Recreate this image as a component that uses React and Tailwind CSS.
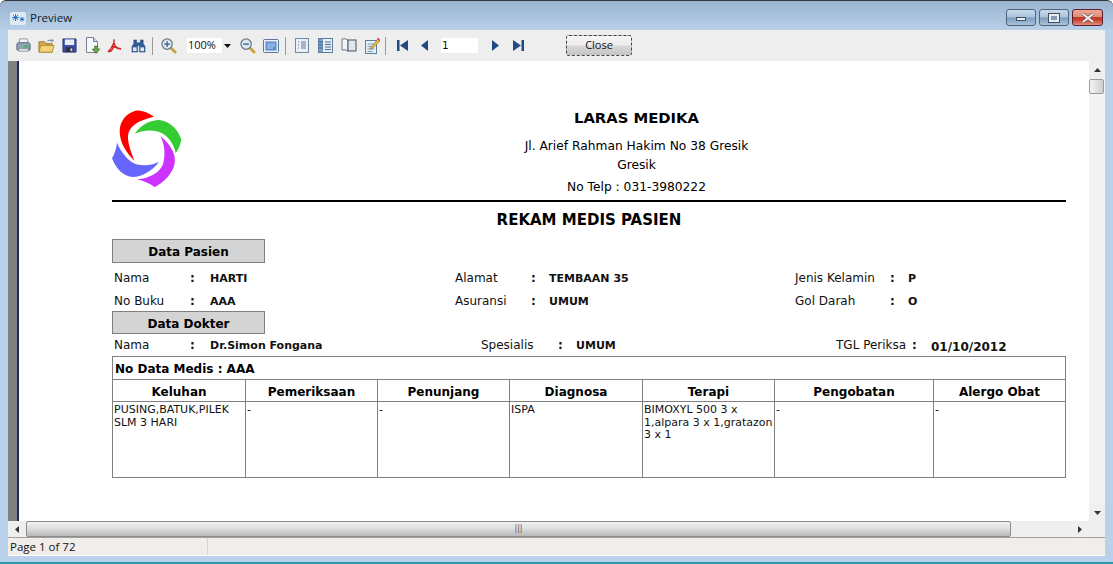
const F = { fontFamily: '"DejaVu Sans", sans-serif' };

const Printer = () => (
  <svg width="17" height="17" viewBox="0 0 18 18">
    <path d="M5 2h8l1 5H4z" fill="#f4f6f8" stroke="#8a949e" />
    <path d="M2 8q0-2 2-2h10q2 0 2 2v5q0 1-1 1H3q-1 0-1-1z" fill="#8fa3b5" stroke="#56687a" />
    <rect x="4" y="12" width="10" height="3" fill="#d8dee4" stroke="#6b7a88" strokeWidth=".6" />
    <rect x="10" y="9" width="4" height="2" fill="#35b34a" />
  </svg>
);
const Folder = () => (
  <svg width="17" height="17" viewBox="0 0 18 18">
    <path d="M1 5h6l1 2h7v9H1z" fill="#d6a94a" stroke="#9a7a34" />
    <path d="M3 9h14l-2 7H1z" fill="#f3d37a" stroke="#b08f3a" />
    <path d="M9 5q2-3 6-2l-1-2 3 3-3 2 .5-1.500q-3-.5-5.500.5z" fill="#7e95ad" />
  </svg>
);
const Floppy = () => (
  <svg width="15" height="15" viewBox="0 0 16 16">
    <path d="M1 1h14v14H1z" fill="#3a4da6" stroke="#2a3880" />
    <rect x="3" y="1.500" width="10" height="6" fill="#e8ecf6" />
    <rect x="4" y="10" width="8" height="5" fill="#2c2f44" />
    <rect x="9" y="11" width="2" height="3" fill="#cfd4e4" />
  </svg>
);
const Export = () => (
  <svg width="16" height="17" viewBox="0 0 16 17">
    <path d="M1.500 .5h7l4 4v11h-11z" fill="#f6f8fb" stroke="#76818d" />
    <path d="M8.500 .5v4h4" fill="#ccd3da" stroke="#76818d" />
    <path d="M9.500 9h3v3h2.500l-4 4.500-4-4.500h2.500z" fill="#6aa648" stroke="#3f6e2a" strokeWidth=".6" />
  </svg>
);
const Pdf = () => (
  <svg width="16" height="16" viewBox="0 0 16 16">
    <path d="M7 1.500q1 4-5.500 12 3 1 5-5 4.500 2.500 7.500 2.500-4-1-6-3q-1.500-4-1-6.500z" fill="none" stroke="#d02020" strokeWidth="1.400" />
  </svg>
);
const Binoc = () => (
  <svg width="15" height="15" viewBox="0 0 16 16">
    <path d="M3 2h3v3h4V2h3v4l2 3v6H9V8H7v7H1V9l2-3z" fill="#2f5a96" stroke="#22406e" strokeWidth=".5" />
    <rect x="2" y="10" width="4" height="4" fill="#dfe8f2" />
    <rect x="10" y="10" width="4" height="4" fill="#dfe8f2" />
  </svg>
);
const Zoom = ({ plus }) => (
  <svg width="16" height="16" viewBox="0 0 17 17">
    <path d="M10 10l5 5" stroke="#c9a33e" strokeWidth="3" strokeLinecap="round" />
    <circle cx="6.500" cy="6.500" r="5.500" fill="#dfe8f1" stroke="#66788a" strokeWidth="1.300" />
    <path d="M3.500 6.500h6" stroke="#4a6c90" strokeWidth="1.600" />
    {plus && <path d="M6.500 3.500v6" stroke="#4a6c90" strokeWidth="1.600" />}
  </svg>
);
const Fit = () => (
  <svg width="16" height="14" viewBox="0 0 16 14">
    <rect x=".5" y=".5" width="15" height="13" rx="1" fill="#e6edf5" stroke="#5d7896" />
    <rect x="2.500" y="2.500" width="11" height="9" fill="#5a8ed0" />
    <path d="M4 5h8M4 7h8M4 9h6" stroke="#dbe8f6" strokeWidth=".8" />
  </svg>
);
const OnePage = () => (
  <svg width="14" height="15" viewBox="0 0 14 15">
    <rect x=".5" y=".5" width="13" height="14" fill="#e8eff6" stroke="#7089a5" />
    <path d="M6 4h5M6 6h5M6 8h5M6 10h5M3 4h1M3 7h1M3 10h1" stroke="#55708e" strokeWidth=".9" />
  </svg>
);
const TwoCol = () => (
  <svg width="15" height="15" viewBox="0 0 15 15">
    <rect x=".5" y=".5" width="14" height="14" fill="#e8eff6" stroke="#5f7c9c" />
    <rect x="1" y="1" width="4" height="13" fill="#7da0c6" />
    <path d="M1 4h4M1 7h4M1 10h4M7 4h6M7 6.500h6M7 9h6M7 11.500h6" stroke="#3f5f85" strokeWidth=".9" />
  </svg>
);
const Book = () => (
  <svg width="16" height="15" viewBox="0 0 16 15">
    <path d="M1 1q3-1 6 1v11q-3-2-6-1z" fill="#f2f4f7" stroke="#6f7b88" />
    <rect x="7" y="2" width="8" height="11" fill="#dfe6ee" stroke="#46525f" />
  </svg>
);
const Notes = () => (
  <svg width="16" height="17" viewBox="0 0 16 17">
    <rect x="1.500" y="3.500" width="11" height="13" fill="#e8f0f8" stroke="#5f7f9f" />
    <path d="M3.500 7h7M3.500 9.500h7M3.500 12h7M3.500 14.500h5" stroke="#6a8db0" strokeWidth=".9" />
    <path d="M7 10l7-8 2 2-7 7-3 1z" fill="#e7c04a" stroke="#8a6d20" strokeWidth=".6" />
    <path d="M13 2l1-1.500 2 2-1 1.500z" fill="#d84848" />
  </svg>
);
const Nav = ({ d, w }) => (
  <svg width={w} height="11" viewBox={`0 0 ${w} 11`}><path d={d} fill="#1f4a86" /></svg>
);
const Sep = ({ ml, mr }) => <div className={`w-[1px] h-[18px] bg-[#9a9a9a] ${ml} ${mr}`} />;

const AppIcon = () => (
  <svg width="16" height="13" viewBox="0 0 16 13" className="mr-[4px]">
    <rect width="16" height="13" rx="2" fill="#dfe9f3" />
    <g stroke="#1c6fc4" strokeWidth=".9">
      <path d="M5.500 2v7M2 5.500h7M3 3l5 5M8 3L3 8" />
      <path d="M12 5v4.500M9.800 7.200h4.400M10.400 5.600l3.200 3.200M13.600 5.600l-3.200 3.200" />
    </g>
  </svg>
);

const logo = (
  <svg width="70" height="78" viewBox="37 27 210 234" className="shrink-0">
    <path d="M163 47C140 32 122 26 105 30C75 40 60 65 60 90C60 125 80 155 105 180C92 150 84 125 85 104C88 75 115 58 163 47Z" fill="#ff0000" />
    <path d="M105 98C125 72 150 57 180 57C212 62 235 85 245 115C243 132 236 146 228 157C224 132 210 112 190 98C165 85 135 86 105 98Z" fill="#33cc33" />
    <path d="M182 105C205 125 222 145 225 170C230 205 200 240 165 258C148 246 130 240 113 235C150 232 180 215 190 190C198 160 195 130 182 105Z" fill="#cc33ff" />
    <path d="M52 125C65 155 85 180 110 190C135 196 158 192 178 183C155 212 125 228 100 228C70 226 50 205 37 172C45 158 50 142 52 125Z" fill="#6666ff" />
  </svg>
);

const SectionBox = ({ children, cls }) => (
  <div className={`w-[153px] border border-[#808080] bg-[#d4d4d4] flex items-center justify-center text-[12px] font-bold text-black ${cls}`}>
    {children}
  </div>
);

const Row = ({ cols, items, cls, big }) => (
  <div className={`grid items-center text-[12px] text-[#111] pl-[2px] ${cols} ${cls}`}>
    {items.map((t, i) => (
      <span
        key={i}
        className={
          i % 3 === 0
            ? "whitespace-nowrap"
            : i % 3 === 1
            ? "font-bold whitespace-nowrap"
            : `font-bold mt-[3px] whitespace-nowrap ${big && i === 8 ? "text-[12px]" : "text-[11px]"}`
        }
      >
        {t}
      </span>
    ))}
  </div>
);

const columns = [
  ["Keluhan", "w-[133px]", "PUSING,BATUK,PILEK SLM 3 HARI"],
  ["Pemeriksaan", "w-[132px]", "-"],
  ["Penunjang", "w-[132px]", "-"],
  ["Diagnosa", "w-[133px]", "ISPA"],
  ["Terapi", "w-[132px]", "BIMOXYL 500 3 x 1,alpara 3 x 1,gratazon 3 x 1"],
  ["Pengobatan", "w-[159px]", "-"],
  ["Alergo Obat", "flex-1", "-"],
];

const scrollBtn = "flex items-center justify-center bg-[#efefef]";
const capBtn = "w-[30px] h-[17px] rounded-[3px] border border-[#50637a] bg-[linear-gradient(to_bottom,#c9dbec_0%,#a9c2da_48%,#7d9bbb_52%,#a9c4dc_100%)] flex items-center justify-center";

export default function App() {
  return (
    <div className="w-[1113px] h-[564px] overflow-hidden bg-white" style={F}>
      <div className="w-full h-full flex flex-col rounded-t-[6px] border-t border-[#30363c] bg-[#b9d1ea] bg-gradient-to-b from-[#9ab4d0] to-[#b9d1ea] bg-[length:100%_30px] bg-no-repeat border-b-2 border-b-[#2c98a8]">
        {/* Title bar */}
        <div className="h-[29px] shrink-0 flex items-center pl-[10px] pr-[10px] pt-[5px]">
          <AppIcon />
          <span className="text-[11.5px] text-[#101a28]" style={{ fontFamily: '"Open Sans", sans-serif' }}>Preview</span>
          <div className="flex ml-auto gap-[3px] mt-[-1px]">
            <div className={capBtn}>
              <div className="w-[10px] h-[4px] bg-[#e8edf2] border border-[#44505e] mt-[3px]" />
            </div>
            <div className={capBtn}>
              <div className="w-[10px] h-[8px] bg-[#7f9cbc] border-2 border-[#e8edf2] outline outline-1 outline-[#44505e]" />
            </div>
            <div className="w-[31px] h-[17px] rounded-[3px] border border-[#5a2030] bg-[linear-gradient(to_bottom,#eba99a_0%,#e08d7c_45%,#c63a2a_50%,#c63a2a_62%,#e2907f_100%)] flex items-center justify-center">
              <svg width="14" height="10" viewBox="0 0 14 10">
                <path d="M2 1l10 8M12 1L2 9" stroke="#6b4a48" strokeWidth="3.400" />
                <path d="M2 1l10 8M12 1L2 9" stroke="#f2eeee" strokeWidth="2.200" />
              </svg>
            </div>
          </div>
        </div>

        {/* Client */}
        <div className="flex-1 min-h-0 flex flex-col mx-[8px] mb-[6px]">
          {/* Toolbar */}
          <div className="h-[31px] shrink-0 bg-[#eeeeee] flex items-center pl-[7px]">
            <div className="w-[23px]"><Printer /></div>
            <div className="w-[24px]"><Folder /></div>
            <div className="w-[23px]"><Floppy /></div>
            <div className="w-[22px]"><Export /></div>
            <div className="w-[24px]"><Pdf /></div>
            <div className="w-[21px]"><Binoc /></div>
            <Sep />
            <div className="ml-[8px] w-[26px]"><Zoom plus /></div>
            <div className="w-[45px] h-[15px] bg-white flex items-center text-[11px] text-[#111] pl-[1px]" style={{ fontFamily: '"Open Sans", sans-serif' }}>
              <span className="flex-1">100%</span>
              <span className="w-[10px] h-full bg-[#eeeeee] flex items-center justify-center">
                <svg width="7" height="4" viewBox="0 0 7 4"><path d="M0 0h7L3.500 4z" fill="#111" /></svg>
              </span>
            </div>
            <div className="ml-[8px] w-[23px]"><Zoom /></div>
            <div className="w-[22px]"><Fit /></div>
            <Sep />
            <div className="ml-[9px] w-[23px]"><OnePage /></div>
            <div className="w-[23px]"><TwoCol /></div>
            <div className="w-[23px]"><Book /></div>
            <div className="w-[21px]"><Notes /></div>
            <Sep />
            <div className="ml-[11px] w-[24px]"><Nav w={11} d="M0 0h2.500v11H0zM11 0v11L3 5.500z" /></div>
            <div className="w-[20px]"><Nav w={7} d="M7 0v11L0 5.500z" /></div>
            <div className="w-[37px] h-[15px] bg-white text-[10.500px] leading-[15px] text-[#111] pl-[1px]">1</div>
            <div className="ml-[14px] w-[21px]"><Nav w={7} d="M0 0v11l7-5.500z" /></div>
            <div className="w-[53px]"><Nav w={11} d="M11 0H8.500v11H11zM0 0v11l8-5.500z" /></div>
            <button className="w-[66px] h-[21px] rounded-[3px] border border-dashed border-[#444] bg-[linear-gradient(to_bottom,#f6f6f6_0%,#ececec_48%,#d8d8d8_52%,#c4c4c4_100%)] text-[11px] text-[#111]" style={{ fontFamily: '"Open Sans", sans-serif' }}>Close</button>
          </div>

          {/* Report area + vertical scrollbar */}
          <div className="flex flex-1 min-h-0">
            <div className="w-[9px] shrink-0 bg-[#808080]" />
            <div className="w-[2px] shrink-0 bg-[#1c2f5a]" />
            <div className="flex-1 bg-white pt-[45px] pl-[93px] pr-[23px] overflow-hidden text-black">
              {/* Letterhead */}
              <div className="flex h-[94px]">
                <div className="pt-[4px]">{logo}</div>
                <div className="flex-1 flex flex-col items-center pl-[25px]">
                  <div className="text-[14.8px] font-bold h-[30px] leading-[24px]">LARAS MEDIKA</div>
                  <div className="text-[12.25px] h-[19px] leading-[20px]">Jl. Arief Rahman Hakim No 38 Gresik</div>
                  <div className="text-[12.25px] h-[22px] leading-[20px]">Gresik</div>
                  <div className="text-[12.25px] h-[20px] leading-[20px]">No Telp : 031-3980222</div>
                </div>
              </div>
              <div className="h-[2px] bg-black" />
              <div className="text-center text-[15px] font-bold h-[37px] leading-[36px]">REKAM MEDIS PASIEN</div>

              <SectionBox cls="h-[24px] pt-[1px]">Data Pasien</SectionBox>
              <Row
                cols="grid-cols-[76px_20px_245px_76px_18px_246px_95px_18px_1fr]"
                cls="h-[23px] mt-[3px]"
                items={["Nama", ":", "HARTI", "Alamat", ":", "TEMBAAN 35", "Jenis Kelamin", ":", "P"]}
              />
              <Row
                cols="grid-cols-[76px_20px_245px_76px_18px_246px_95px_18px_1fr]"
                cls="h-[23px]"
                items={["No Buku", ":", "AAA", "Asuransi", ":", "UMUM", "Gol Darah", ":", "O"]}
              />
              <SectionBox cls="h-[23px] mt-[-1px] pt-[2px]">Data Dokter</SectionBox>
              <Row
                big
                cols="grid-cols-[76px_20px_271px_77px_18px_260px_76px_19px_1fr]"
                cls="h-[22px]"
                items={["Nama", ":", "Dr.Simon Fongana", "Spesialis", ":", "UMUM", "TGL Periksa", ":", "01/10/2012"]}
              />

              {/* Table */}
              <div className="border border-[#808080] border-b-0 h-[122px] w-[954px] flex flex-col">
                <div className="h-[23px] shrink-0 border-b border-[#808080] flex items-center pl-[2px] pt-[2px] text-[12px] font-bold">No Data Medis : AAA</div>
                <div className="flex flex-1 border-b border-[#808080]">
                  {columns.map(([h, w, body], i) => (
                    <div key={h} className={`${w} flex flex-col ${i < 6 ? "border-r border-[#808080]" : ""}`}>
                      <div className="h-[22px] shrink-0 border-b border-[#808080] flex items-center justify-center pt-[2px] text-[12px] font-bold whitespace-nowrap">{h}</div>
                      <div className="pl-[1px] pt-[2px] text-[11px] leading-[12.500px] text-[#111]">{body}</div>
                    </div>
                  ))}
                </div>
              </div>
            </div>

            {/* V scrollbar */}
            <div className="w-[16px] shrink-0 bg-[#f3f3f3] flex flex-col">
              <div className={`${scrollBtn} h-[18px]`}>
                <svg width="7" height="4" viewBox="0 0 7 4"><path d="M3.500 0L7 4H0z" fill="#333" /></svg>
              </div>
              <div className="h-[15px] mr-[1px] rounded-[2px] border border-[#9a9a9a] bg-gradient-to-r from-[#f4f4f4] to-[#cfcfcf]" />
              <div className="flex-1" />
              <div className={`${scrollBtn} h-[17px]`}>
                <svg width="7" height="4" viewBox="0 0 7 4"><path d="M3.500 4L7 0H0z" fill="#333" /></svg>
              </div>
            </div>
          </div>

          {/* H scrollbar */}
          <div className="h-[17px] shrink-0 flex bg-[#eeeeee] border-b border-[#a0a0a0]">
            <div className={`${scrollBtn} w-[18px]`}>
              <svg width="4" height="7" viewBox="0 0 4 7"><path d="M0 3.500L4 0v7z" fill="#333" /></svg>
            </div>
            <div className="w-[985px] rounded-[2px] border border-[#8c8c8c] bg-gradient-to-b from-[#f2f2f2] via-[#dcdcdc] to-[#b8b8b8] flex items-center justify-center">
              <span className="text-[8px] leading-none text-[#555]">|||</span>
            </div>
            <div className="flex-1" />
            <div className={`${scrollBtn} w-[18px] mr-[16px]`}>
              <svg width="4" height="7" viewBox="0 0 4 7"><path d="M4 3.500L0 0v7z" fill="#333" /></svg>
            </div>
          </div>

          {/* Status bar */}
          <div className="h-[18px] shrink-0 flex bg-[#f0edeb] border-b border-white text-[11.500px] leading-[17px] text-[#111]" style={{ fontFamily: '"Open Sans", sans-serif' }}>
            <div className="w-[200px] pl-[2px] border-r border-[#d8d4d0]">Page 1 of 72</div>
          </div>
        </div>
      </div>
    </div>
  );
}
